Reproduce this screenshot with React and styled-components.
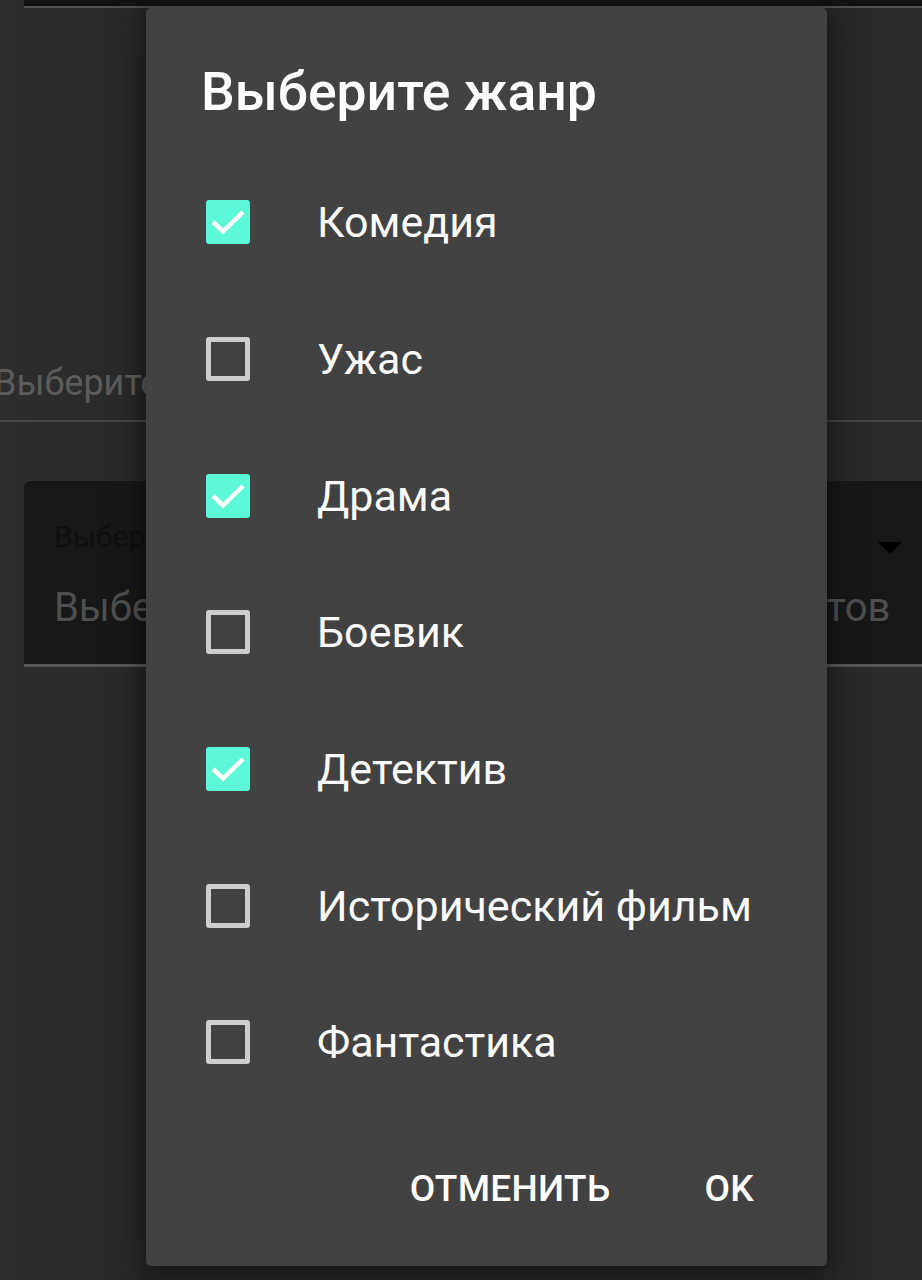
import React, { useState } from 'react';
import styled, { createGlobalStyle } from 'styled-components';

const GlobalStyle = createGlobalStyle`
  body {
    margin: 0;
    background: #2b2b2b;
    font-family: Roboto, "Noto Sans", sans-serif;
  }
`;

// page behind the dialog, already dimmed by the scrim
const Page = styled.div`
  position: relative;
  width: 922px;
  height: 1280px;
  overflow: hidden;
  background: linear-gradient(to right, #2d2d2d 0, #2a2a2a 120px, #262626 146px, #262626 828px, #2a2a2a 860px, #2c2c2c 100%);
`;

const TopBar = styled.div`
  margin-left: 24px;
  height: 6px;
  background: #131313;
  border-bottom: 2px solid #505050;
`;

const Hint = styled.div`
  margin-top: 355px;
  margin-left: -6px;
  font-size: 36px;
  color: #5c5c5c;
  line-height: 40px;
  white-space: nowrap;
`;

const Divider = styled.div`
  margin-top: 17px;
  height: 2px;
  background: #464646;
`;

const Field = styled.div`
  margin: 59px 0 0 24px;
  height: 183px;
  background: #171717;
  border-top-left-radius: 6px;
  border-bottom: 3px solid #575757;
  display: flex;
  padding: 0 32px 0 30px;
  position: relative;
  overflow: hidden;
`;

const FieldText = styled.div`
  flex: 1;
  min-width: 0;
  display: flex;
  flex-direction: column;
  padding-top: 38px;
  white-space: nowrap;

  .label {
    font-size: 30px;
    color: #0e0e0e;
  }
  .value {
    margin-top: 30px;
    font-size: 40px;
    letter-spacing: -0.15px;
    color: #4f4f4f;
  }
`;

const Arrow = styled.div`
  position: absolute;
  right: 20px;
  top: 61px;
  width: 0;
  height: 0;
  border-left: 12px solid transparent;
  border-right: 12px solid transparent;
  border-top: 12px solid #000;
`;

const Dialog = styled.div`
  position: absolute;
  left: 146px;
  top: 8px;
  width: 681px;
  height: 1258px;
  box-sizing: border-box;
  background: #424242;
  border-radius: 5px;
  box-shadow: 0 10px 40px rgba(0, 0, 0, 0.35), 0 0 14px rgba(0, 0, 0, 0.25);
  display: flex;
  flex-direction: column;
  padding: 54px 0 0;
  color: #fff;
`;

const Title = styled.h2`
  margin: 0 0 0 55px;
  font-size: 53.5px;
  font-weight: 500;
  line-height: 60px;
`;

const List = styled.div`
  margin-top: 32px;
  display: flex;
  flex-direction: column;
`;

const Row = styled.label`
  height: 136.7px;
  display: flex;
  align-items: center;
  padding-left: 60px;
  cursor: pointer;
`;

const Box = styled.span`
  width: 44px;
  height: 44px;
  box-sizing: border-box;
  border-radius: 3px;
  border: ${(p) => (p.$checked ? 'none' : '5px solid #cdcdcd')};
  background: ${(p) => (p.$checked ? '#5df8d8' : 'transparent')};
  display: flex;
  align-items: center;
  justify-content: center;
  flex-shrink: 0;
`;

const ItemText = styled.span`
  margin-left: 67px;
  font-size: 43px;
  color: #fafafa;
  white-space: nowrap;
`;

const Actions = styled.div`
  margin-top: auto;
  margin-bottom: 46px;
  display: flex;
  justify-content: flex-end;
  padding-right: 52px;
  gap: 52px;
`;

const Button = styled.button`
  background: none;
  border: none;
  color: #fff;
  font-family: Roboto, "Noto Sans", sans-serif;
  font-weight: 500;
  font-size: 37px;
  letter-spacing: 0.3px;
  padding: 10px 21px;
  cursor: pointer;
`;

const genres = [
  'Комедия',
  'Ужас',
  'Драма',
  'Боевик',
  'Детектив',
  'Исторический фильм',
  'Фантастика',
];

const Check = () => (
  <svg width="44" height="44" viewBox="0 0 44 44">
    <polyline points="7,22 17,31.5 37,12" fill="none" stroke="#fff" strokeWidth="4.5" />
  </svg>
);

const App = () => {
  const [checked, setChecked] = useState([true, false, true, false, true, false, false]);

  const toggle = (i) => {
    const next = checked.slice(0);
    next[i] = !next[i];
    setChecked(next);
  };

  return (
    <Page>
      <GlobalStyle />
      <TopBar />
      <Hint>Выберите жанр фильма</Hint>
      <Divider />
      <Field>
        <FieldText>
          <div className="label">Выберите жанр</div>
          <div className="value">Выберите несколько подходящих вариантов</div>
        </FieldText>
        <Arrow />
      </Field>
      <Dialog>
        <Title>Выберите жанр</Title>
        <List>
          {genres.map((g, i) => (
            <Row key={g} onClick={() => toggle(i)}>
              <Box $checked={checked[i]}>{checked[i] && <Check />}</Box>
              <ItemText>{g}</ItemText>
            </Row>
          ))}
        </List>
        <Actions>
          <Button>ОТМЕНИТЬ</Button>
          <Button>OK</Button>
        </Actions>
      </Dialog>
    </Page>
  );
};

export default App;
